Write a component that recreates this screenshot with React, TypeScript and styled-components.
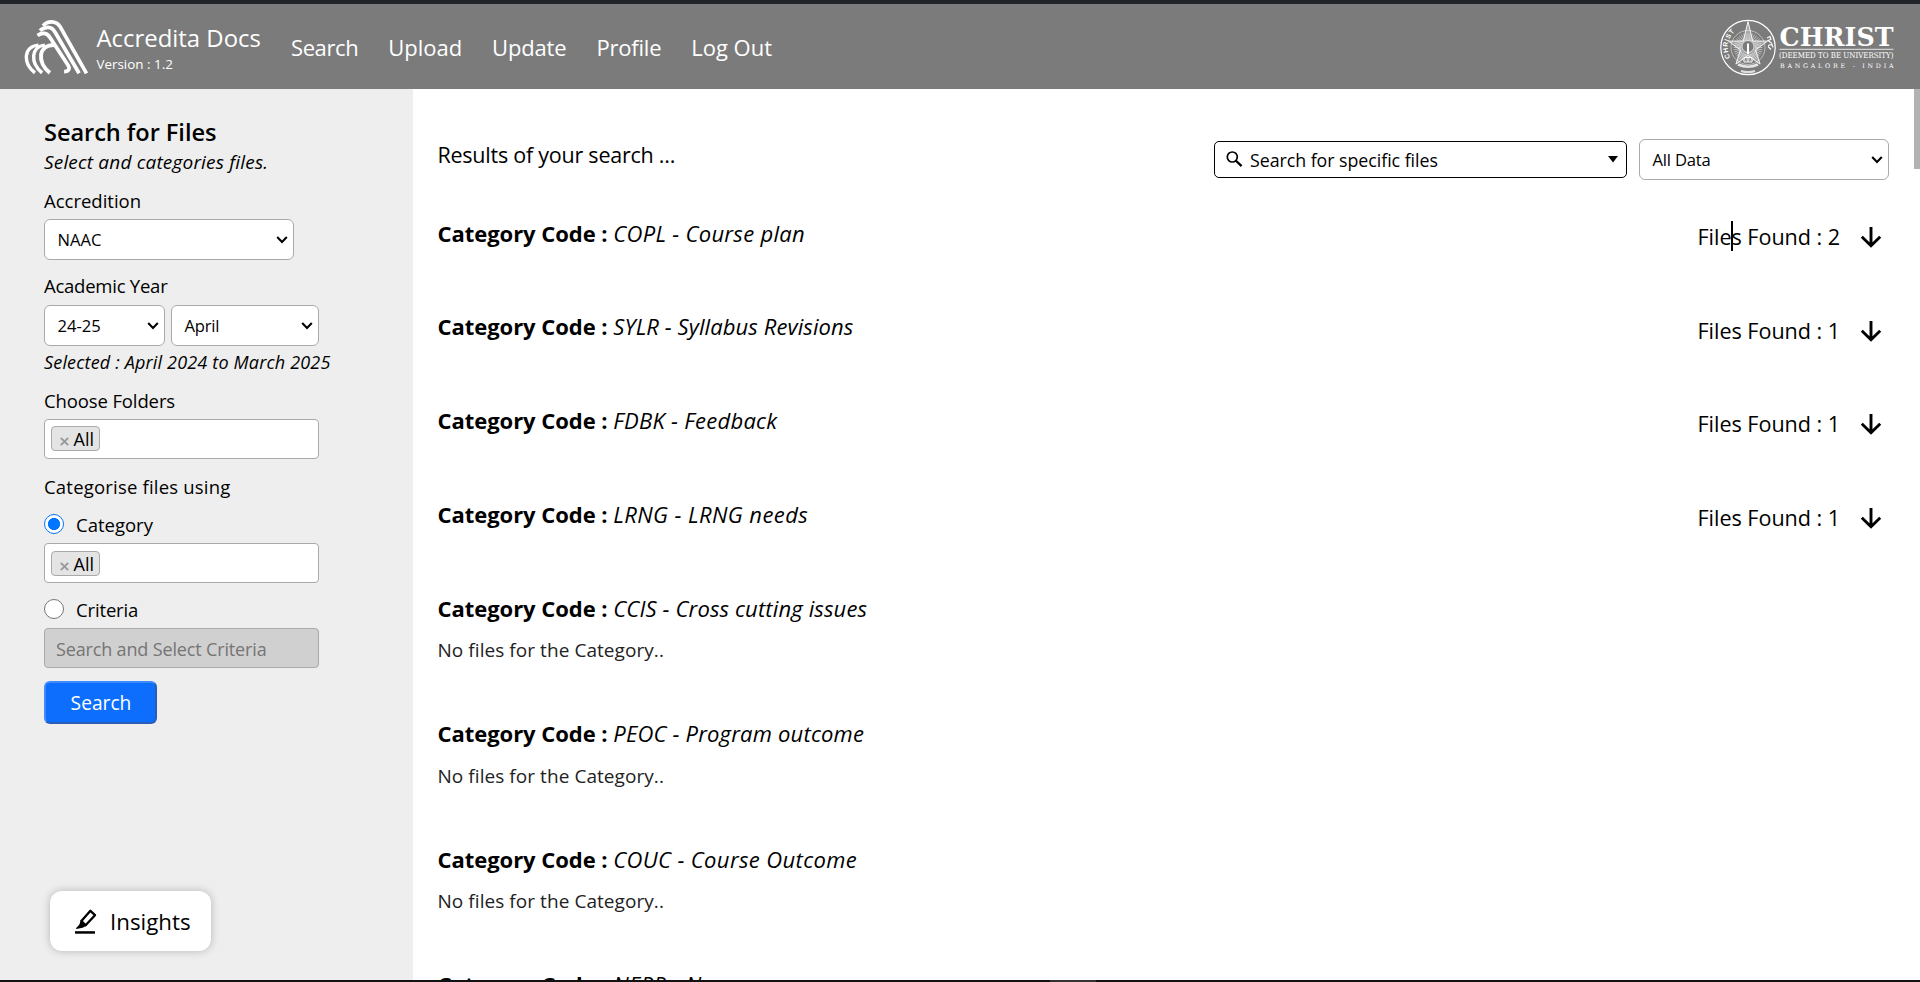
import React from "react";
import styled, { createGlobalStyle, css } from "styled-components";

const GlobalStyle = createGlobalStyle`
  *, *::before, *::after { box-sizing: border-box; }
  body {
    margin: 0;
    background: #fff;
    color: #000;
    font-family: "Open Sans", "Noto Sans", sans-serif;
    overflow: hidden;
  }
`;

const Page = styled.div`
  display: flex;
  flex-direction: column;
  height: 982px;
  overflow: hidden;
  border-top: 4px solid #212529;
`;

const Header = styled.header`
  display: flex;
  flex: none;
  height: 85px;
  padding: 0 25px 0 24px;
  background: #7b7b7b;
  color: #fff;
`;

const BrandMark = styled.svg`
  flex: none;
  width: 66px;
  height: 56px;
  margin-top: 15px;
`;

const Brand = styled.div`
  width: 201px;
  padding: 17px 0 0 6.5px;
  white-space: nowrap;
`;

const BrandName = styled.div`
  font-size: 23.9px;
  line-height: 33px;
`;

const Version = styled.div`
  margin-top: 1px;
  font-size: 13.4px;
  line-height: 18px;
`;

const Nav = styled.nav`
  display: flex;
  flex: 1;
  gap: 29.9px;
  padding-top: 28px;
`;

const NavLink = styled.a<{ $track?: number }>`
  font-size: 22px;
  line-height: 30px;
  letter-spacing: ${(p) => p.$track ?? 0}px;
  white-space: nowrap;
`;

const University = styled.svg`
  flex: none;
  width: 175px;
  height: 58px;
  margin-top: 15px;
  overflow: visible;
`;

const Body = styled.div`
  display: flex;
  flex: 1;
  min-height: 0;
`;

const Sidebar = styled.aside`
  display: flex;
  flex-direction: column;
  flex: none;
  width: 413px;
  padding: 27px 0 29px 44px;
  background: #eee;
  white-space: nowrap;
`;

const SideTitle = styled.h1`
  margin: 0;
  font-size: 23.6px;
  font-weight: 580;
  line-height: 32px;
  letter-spacing: -0.06px;
`;

const Hint = styled.p<{ $size: number; $top: number; $track: number }>`
  margin: ${(p) => p.$top}px 0 0;
  font-size: ${(p) => p.$size}px;
  font-style: italic;
  line-height: ${(p) => (p.$size > 18 ? 26 : 24)}px;
  letter-spacing: ${(p) => p.$track}px;
`;

const Label = styled.div<{ $top: number; $track?: number }>`
  margin-top: ${(p) => p.$top}px;
  font-size: 18.5px;
  line-height: 25px;
  letter-spacing: ${(p) => p.$track ?? 0}px;
`;

const SelectRow = styled.div<{ $top: number }>`
  display: flex;
  gap: 6px;
  margin-top: ${(p) => p.$top}px;
`;

const SelectBox = styled.div<{ $width: number; $track?: number }>`
  display: flex;
  align-items: center;
  justify-content: space-between;
  flex: none;
  width: ${(p) => p.$width}px;
  height: 41px;
  padding: 0 5px 0 12.5px;
  border: 1px solid #aaa;
  border-radius: 6px;
  background: #fff;
  font-size: 16.6px;
  letter-spacing: ${(p) => p.$track ?? 0}px;

  svg { flex: none; }
`;

const field = css`
  display: flex;
  flex: none;
  width: 275px;
  height: 40px;
  margin-top: 6px;
  border: 1px solid #aaa;
  border-radius: 4px;
`;

const TagField = styled.div<{ $inset: number }>`
  ${field}
  padding: ${(p) => p.$inset}px 0 0 6px;
  background: #fff;
`;

const Tag = styled.span`
  display: flex;
  width: 49px;
  height: 25px;
  padding-left: 8px;
  border: 1px solid #aaa;
  border-radius: 4px;
  background: #e4e4e4;
  font-size: 18px;
  line-height: 24px;

  svg {
    flex: none;
    margin: 10px 4.5px 0 0;
  }
`;

const DisabledField = styled.div`
  ${field}
  padding-left: 11px;
  background: #d0d0d0;
  color: #757575;
  font-size: 18px;
  line-height: 41px;
  letter-spacing: -0.15px;
`;

const RadioRow = styled.label<{ $top: number; $track?: number }>`
  display: flex;
  gap: 12px;
  height: 25px;
  margin-top: ${(p) => p.$top}px;
  font-size: 18.5px;
  line-height: 25px;
  letter-spacing: ${(p) => p.$track ?? 0}px;
`;

const RadioDot = styled.span<{ $checked?: boolean }>`
  width: 20px;
  height: 20px;
  margin-top: 2px;
  border: ${(p) => (p.$checked ? "1.5px solid #0075ff" : "1px solid #767676")};
  border-radius: 50%;
  background: ${(p) => (p.$checked ? "radial-gradient(circle, #0075ff 5.7px, #fff 6.4px)" : "#fff")};
`;

const SearchButton = styled.button`
  width: 113px;
  height: 43px;
  margin-top: 13px;
  padding: 1px 0 0 1px;
  border: 2px solid;
  border-color: #3d8bff #2a5db5 #2a5db5 #3d8bff;
  border-radius: 6px;
  background: #0d6efd;
  color: #fff;
  font-family: inherit;
  font-size: 19.2px;
  line-height: 38px;
`;

const Insights = styled.button`
  display: flex;
  align-items: center;
  gap: 13px;
  width: 161px;
  height: 60px;
  margin: auto 0 0 6px;
  padding: 1px 0 0 25px;
  border: 0;
  border-radius: 12px;
  background: #fff;
  box-shadow: 0 0 8px rgba(0, 0, 0, 0.24);
  color: #000;
  font-family: inherit;
  font-size: 22.3px;
  font-weight: 500;
`;

const Main = styled.main`
  flex: 1;
  min-width: 0;
  padding: 50px 25px 0 24.5px;
  overflow: hidden;
  white-space: nowrap;
`;

const Toolbar = styled.div`
  display: flex;
  align-items: center;
  gap: 12px;
  height: 41px;
  margin-bottom: 37.6px;
`;

const ResultsHeading = styled.div`
  flex: 1;
  align-self: flex-start;
  margin-top: 1px;
  font-size: 21.5px;
  line-height: 29px;
  letter-spacing: -0.24px;
`;

const Combo = styled.div`
  display: flex;
  align-items: center;
  width: 413px;
  height: 37px;
  padding: 0 8px 0 11px;
  border: 1px solid #000;
  border-radius: 5px;
  font-size: 17.8px;

  span {
    flex: 1;
    margin-left: 7px;
    letter-spacing: -0.04px;
  }
`;

const Category = styled.section<{ $empty: boolean }>`
  display: grid;
  grid-template-columns: 1fr auto;
  align-content: start;
  height: ${(p) => (p.$empty ? 125.6 : 93.75)}px;
`;

const CategoryTitle = styled.div`
  font-size: 22px;
  line-height: 30px;
  letter-spacing: -0.04px;
`;

const CategoryName = styled.i<{ $track: number }>`
  letter-spacing: ${(p) => p.$track - 0.06}px;
`;

const FilesFound = styled.div`
  display: flex;
  width: 191.5px;
  height: 30px;
  margin-top: 4.4px;
  font-size: 21.6px;
  line-height: 30px;
  letter-spacing: -0.04px;

  svg { margin: 5px 6px 0 auto; }
`;

const Count = styled.span`
  position: relative;
`;

const TextCursor = styled.span`
  position: absolute;
  top: -1px;
  left: 33px;
  width: 2px;
  height: 30px;
  background: #000;
`;

const EmptyNote = styled.div`
  grid-column: 1;
  margin-top: 14.7px;
  color: #222;
  font-size: 19px;
  line-height: 26px;
  letter-spacing: 0.06px;
`;

const ScrollTrack = styled.div`
  flex: none;
  width: 6px;
`;

const ScrollThumb = styled.div`
  height: 80px;
  background: #b2b2b2;
`;

const BottomEdge = styled.div`
  display: flex;
  flex: none;
  height: 2px;
  padding-left: 1050px;
  background: #111;
`;

const BottomTab = styled.div`
  width: 46px;
  background: #333;
`;

const Chevron = () => (
  <svg width="12" height="8" viewBox="0 0 12 8" fill="none" stroke="#000" strokeWidth="2.1">
    <path d="M1.2 1.1 L6 5.9 L10.8 1.1" />
  </svg>
);

const Cross = () => (
  <svg width="9" height="9" viewBox="0 0 9 9" fill="none" stroke="#999" strokeWidth="1.9">
    <path d="M.8 .8 L8.2 8.2 M8.2 .8 L.8 8.2" />
  </svg>
);

const DownArrow = () => (
  <svg width="24" height="22" viewBox="0 0 24 22" fill="none" stroke="#000" strokeWidth="2.9">
    <path d="M12 0 V19 M2.8 9.8 L12 18.8 L21.2 9.8" />
  </svg>
);

const SearchIcon = () => (
  <svg width="17" height="17" viewBox="0 0 17 17" fill="none" stroke="#000">
    <circle cx="6.3" cy="6" r="5" strokeWidth="1.7" />
    <path d="M9.7 9.5 L15.6 15.2" strokeWidth="2.3" />
  </svg>
);

const PenIcon = () => (
  <svg width="22" height="26" viewBox="0 0 22 26">
    <path d="M15.4 1.8 L20 6.2 L10.6 16.2 L6.4 12 Z" fill="none" stroke="#000" strokeWidth="2.3" strokeLinejoin="round" />
    <path d="M6 10.4 L12 16.6 L7.6 18.8 L1.4 20 L1 19.2 L4.4 15.6 Z" />
    <rect x="0" y="22.2" width="20" height="2.5" />
  </svg>
);

const AccreditaMark = () => (
  <BrandMark viewBox="23.5 18.7 66 56" fill="none" stroke="#fff">
    <g strokeWidth="3.7">
      <path d="M42.6 25.6 C46.4 20.4 55.6 19.8 59.6 26.4 L86 73" />
      <path d="M39.4 30.4 C44.6 26 51 25.4 54.6 32 L78.6 73" />
      <path d="M37 35.2 C41.6 32 46.6 32 50 38 L67.4 64.6 C69.8 68.4 68.4 71.4 63.6 71.4" />
    </g>
    <g strokeWidth="3.4">
      <path d="M38 44.8 C23 46 22 62.6 34.4 72.6" />
      <path d="M44.4 44.8 C30.4 46 29.4 62.6 41.6 72.6" />
      <path d="M55 44.8 C37 43.8 36.4 62.4 49.4 72.6" strokeWidth="4" />
    </g>
  </BrandMark>
);

const rays = Array.from({ length: 40 }, (_, i) => {
  const a = (i * Math.PI) / 20;
  return `M${28 + 7 * Math.cos(a)} ${28.5 + 7 * Math.sin(a)} L${28 + 14.5 * Math.cos(a)} ${28.5 + 14.5 * Math.sin(a)}`;
}).join(" ");

const star = Array.from({ length: 10 }, (_, i) => {
  const r = i % 2 ? 8 : i === 0 ? 26 : 20.5;
  const a = -Math.PI / 2 + (i * Math.PI) / 5;
  return `${28 + r * Math.cos(a)},${28.5 + r * Math.sin(a)}`;
}).join(" ");

const UniversityLogo = () => (
  <University viewBox="0 0 175 58" fill="#fff">
    <g fill="none" stroke="#fff">
      <circle cx="28" cy="28.5" r="27.2" strokeWidth="1.2" />
      <circle cx="28" cy="28.5" r="17" strokeWidth=".7" opacity=".7" />
      <path d={rays} strokeWidth=".8" opacity=".6" />
      <polygon points={star} fill="#fff" fillOpacity=".3" strokeWidth=".9" />
      <circle cx="28" cy="27.5" r="6" fill="#7b7b7b" strokeWidth=".7" />
      <path d="M28 24.5 V35" strokeWidth="2" />
      <path d="M24 38.5 H32 V43 H24 Z M28 38 V43" strokeWidth=".9" />
      <path d="M18 45.5 Q28 50 38 45.5" strokeWidth="2.6" opacity=".8" />
      <path d="M21 52 Q28 54.3 35 52" strokeWidth="2.2" opacity=".75" />
      <path d="M47 19 l3 -1.5 l1 3 l-3 1 l4 3 m-4 2 l4 -1 l1 3 m-5 -1 l3 3" strokeWidth="1.1" />
    </g>
    <path id="sealArc" d="M10.4 38.6 A20.4 20.4 0 0 1 17.4 11" fill="none" />
    <text fontFamily="Liberation Sans" fontWeight="700" fontSize="6.8">
      <textPath href="#sealArc" textLength="28">CHRIST</textPath>
    </text>
    <text x="59.5" y="27" fontFamily="DejaVu Serif, serif" fontWeight="700" fontSize="25.5" textLength="114" lengthAdjust="spacingAndGlyphs">CHRIST</text>
    <rect x="59.5" y="29.8" width="114" height="1" opacity=".8" />
    <text x="59" y="39.3" fontFamily="DejaVu Serif, serif" fontSize="7.9" textLength="114.5" lengthAdjust="spacingAndGlyphs">(DEEMED TO BE UNIVERSITY)</text>
    <text x="60" y="49" fontFamily="DejaVu Serif, serif" fontSize="6.3" textLength="113.5">BANGALORE - INDIA</text>
  </University>
);

const categories = [
  { name: "COPL - Course plan", track: 0.36, files: 2 },
  { name: "SYLR - Syllabus Revisions", track: 0.15, files: 1 },
  { name: "FDBK - Feedback", track: 0.33, files: 1 },
  { name: "LRNG - LRNG needs", track: 0.47, files: 1 },
  { name: "CCIS - Cross cutting issues", track: 0.2, files: 0 },
  { name: "PEOC - Program outcome", track: 0.25, files: 0 },
  { name: "COUC - Course Outcome", track: 0.43, files: 0 },
  { name: "NEPP - N", track: 0.4, files: 0 },
];

export default function App() {
  return (
    <Page>
      <GlobalStyle />
      <Header>
        <AccreditaMark />
        <Brand>
          <BrandName>Accredita Docs</BrandName>
          <Version>Version : 1.2</Version>
        </Brand>
        <Nav>
          <NavLink $track={-0.4}>Search</NavLink>
          <NavLink>Upload</NavLink>
          <NavLink $track={-0.15}>Update</NavLink>
          <NavLink $track={-0.2}>Profile</NavLink>
          <NavLink>Log Out</NavLink>
        </Nav>
        <UniversityLogo />
      </Header>
      <Body>
        <Sidebar>
          <SideTitle>Search for Files</SideTitle>
          <Hint $size={19} $top={1} $track={0.18}>Select and categories files.</Hint>
          <Label $top={13}>Accredition</Label>
          <SelectRow $top={6}>
            <SelectBox $width={250}>NAAC<Chevron /></SelectBox>
          </SelectRow>
          <Label $top={13} $track={-0.24}>Academic Year</Label>
          <SelectRow $top={7}>
            <SelectBox $width={121}>24-25<Chevron /></SelectBox>
            <SelectBox $width={148} $track={-0.2}>April<Chevron /></SelectBox>
          </SelectRow>
          <Hint $size={18} $top={4} $track={0.17}>Selected : April 2024 to March 2025</Hint>
          <Label $top={14} $track={-0.12}>Choose Folders</Label>
          <TagField $inset={6}><Tag><Cross />All</Tag></TagField>
          <Label $top={15} $track={0.2}>Categorise files using</Label>
          <RadioRow $top={13}><RadioDot $checked />Category</RadioRow>
          <TagField $inset={7}><Tag><Cross />All</Tag></TagField>
          <RadioRow $top={14} $track={-0.15}><RadioDot />Criteria</RadioRow>
          <DisabledField>Search and Select Criteria</DisabledField>
          <SearchButton>Search</SearchButton>
          <Insights><PenIcon />Insights</Insights>
        </Sidebar>
        <Main>
          <Toolbar>
            <ResultsHeading>Results of your search ...</ResultsHeading>
            <Combo>
              <SearchIcon />
              <span>Search for specific files</span>
              <svg width="10" height="7" viewBox="0 0 10 7"><path d="M0 0 H10 L5 6.5 Z" /></svg>
            </Combo>
            <SelectBox $width={250} $track={-0.2}>All Data<Chevron /></SelectBox>
          </Toolbar>
          {categories.map((c, i) => (
            <Category key={c.name} $empty={c.files === 0}>
              <CategoryTitle>
                <b>Category Code :</b> <CategoryName $track={c.track}>{c.name}</CategoryName>
              </CategoryTitle>
              {c.files > 0 ? (
                <FilesFound>
                  <Count>
                    Files Found : {c.files}
                    {i === 0 && <TextCursor />}
                  </Count>
                  <DownArrow />
                </FilesFound>
              ) : (
                <EmptyNote>No files for the Category..</EmptyNote>
              )}
            </Category>
          ))}
        </Main>
        <ScrollTrack><ScrollThumb /></ScrollTrack>
      </Body>
      <BottomEdge><BottomTab /></BottomEdge>
    </Page>
  );
}
